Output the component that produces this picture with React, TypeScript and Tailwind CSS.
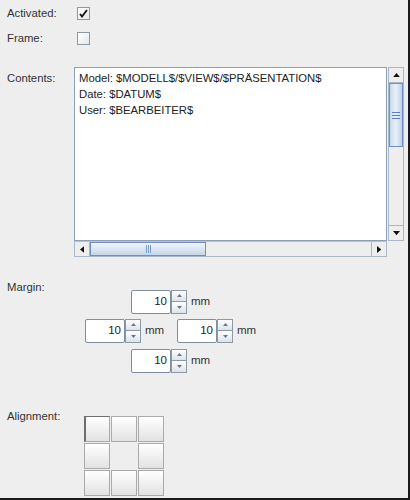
import React from 'react';

const font = { fontFamily: '"Liberation Sans", Arial, sans-serif' };

const Check: React.FC<{ checked?: boolean }> = ({ checked }) => (
  <div className="w-[13px] h-[13px] border border-[#8a99a6] bg-gradient-to-br from-white to-[#e4e8ec] flex items-center justify-center">
    {checked && (
      <svg width="9" height="9" viewBox="0 0 9 9">
        <path d="M1 5 L3 7.5 L8 1" stroke="#111" strokeWidth="1.8" fill="none" />
      </svg>
    )}
  </div>
);

const Arrow: React.FC<{ dir: 'up' | 'down' | 'left' | 'right'; small?: boolean }> = ({ dir, small }) => {
  const s = small ? 5 : 7;
  const pts = {
    up: `0,${s * 0.6} ${s / 2},0 ${s},${s * 0.6}`,
    down: `0,0 ${s / 2},${s * 0.6} ${s},0`,
    left: `${s * 0.6},0 0,${s / 2} ${s * 0.6},${s}`,
    right: `0,0 ${s * 0.6},${s / 2} 0,${s}`,
  }[dir];
  const horiz = dir === 'left' || dir === 'right';
  return (
    <svg width={horiz ? s * 0.6 : s} height={horiz ? s : s * 0.6}>
      <polygon points={pts} fill={small ? '#6a7888' : '#111'} />
    </svg>
  );
};

const Spinner: React.FC = () => (
  <div className="flex items-center h-[24px]">
    <div className="w-[40px] h-[24px] bg-white border border-[#7f8e9c] rounded-[2px] flex items-center justify-end pr-[3px] text-[11.5px] text-[#222]">
      10
    </div>
    <div className="flex flex-col w-[16px] h-[24px]">
      <div className="h-[12px] border border-[#8a99a6] bg-gradient-to-b from-white to-[#dde3ea] flex items-center justify-center">
        <Arrow dir="up" small />
      </div>
      <div className="h-[12px] border border-t-0 border-[#8a99a6] bg-gradient-to-b from-white to-[#dde3ea] flex items-center justify-center">
        <Arrow dir="down" small />
      </div>
    </div>
    <span className="ml-[4px] text-[11.5px] text-[#333]">mm</span>
  </div>
);

const Cell: React.FC<{ first?: boolean; empty?: boolean }> = ({ first, empty }) =>
  empty ? (
    <div className="w-[26px] h-[26px]" />
  ) : (
    <div
      className={`w-[26px] h-[26px] border bg-gradient-to-b from-white to-[#e2e2e2] ${
        first ? 'border-[#a8a8a8] border-l-[#6e6e6e] border-t-[#6e6e6e] border-l-2' : 'border-[#aaaaaa]'
      }`}
    />
  );

export default function App() {
  return (
    <div style={font} className="w-[410px] h-[500px] bg-[#eeeeee] border-r-2 border-b-2 border-[#1a1a1a] text-[11.3px] text-[#333] overflow-hidden">
      <div className="pl-[7px] pt-[7px]">
        <div className="flex items-center h-[13px]">
          <span className="w-[70px]">Activated:</span>
          <Check checked />
        </div>
        <div className="flex items-center h-[13px] mt-[12px]">
          <span className="w-[70px]">Frame:</span>
          <Check />
        </div>

        <div className="flex mt-[22px]">
          <span className="w-[67px] pt-[3px]">Contents:</span>
          <div className="grid grid-cols-[313px_17px] grid-rows-[174px_16px]">
            <div className="bg-white border border-[#8d9fb2] pl-[4px] pt-[2px] leading-[16px] text-[#222]">
              <div>Model: $MODELL$/$VIEW$/$PRÄSENTATION$</div>
              <div>Date: $DATUM$</div>
              <div>User: $BEARBEITER$</div>
            </div>
            <div className="ml-[1px] border border-[#a9b8c6] flex flex-col bg-[#eeeeee]">
              <div className="h-[15px] border-b border-[#a9b8c6] flex items-center justify-center">
                <Arrow dir="up" />
              </div>
              <div className="h-[64px] border border-[#6f8fc6] bg-gradient-to-r from-[#c9daee] via-[#eaf1f9] to-[#bcd0e8] flex flex-col items-center justify-center gap-[2px]">
                <div className="w-[8px] h-[1px] bg-[#5a7fc0]" />
                <div className="w-[8px] h-[1px] bg-[#5a7fc0]" />
                <div className="w-[8px] h-[1px] bg-[#5a7fc0]" />
              </div>
              <div className="flex-1" />
              <div className="h-[15px] border-t border-[#a9b8c6] flex items-center justify-center">
                <Arrow dir="down" />
              </div>
            </div>
            <div className="border border-[#a9b8c6] border-t-[#b9c2cb] flex bg-[#eeeeee]">
              <div className="w-[15px] border-r border-[#a9b8c6] flex items-center justify-center">
                <Arrow dir="left" />
              </div>
              <div className="w-[116px] border border-[#6f8fc6] bg-gradient-to-b from-[#f2f6fb] to-[#c4d6ea] flex items-center justify-center gap-[1px]">
                <div className="w-[1px] h-[8px] bg-[#7f9bcf]" />
                <div className="w-[1px] h-[8px] bg-[#7f9bcf]" />
                <div className="w-[1px] h-[8px] bg-[#7f9bcf]" />
              </div>
              <div className="flex-1" />
              <div className="w-[15px] border-l border-[#a9b8c6] flex items-center justify-center">
                <Arrow dir="right" />
              </div>
            </div>
            <div />
          </div>
        </div>

        <div className="mt-[22px]">Margin:</div>
        <div className="flex flex-col">
          <div className="pl-[124px] -mt-[6px]">
            <Spinner />
          </div>
          <div className="pl-[78px] mt-[5px] flex">
            <div className="w-[92px]">
              <Spinner />
            </div>
            <Spinner />
          </div>
          <div className="pl-[124px] mt-[6px]">
            <Spinner />
          </div>
        </div>

        <div className="mt-[35px] flex">
          <span className="w-[77px]">Alignment:</span>
          <div className="grid grid-cols-[26px_26px_26px] gap-[1px] mt-[8px]">
            <Cell first />
            <Cell />
            <Cell />
            <Cell />
            <Cell empty />
            <Cell />
            <Cell />
            <Cell />
            <Cell />
          </div>
        </div>
      </div>
    </div>
  );
}
